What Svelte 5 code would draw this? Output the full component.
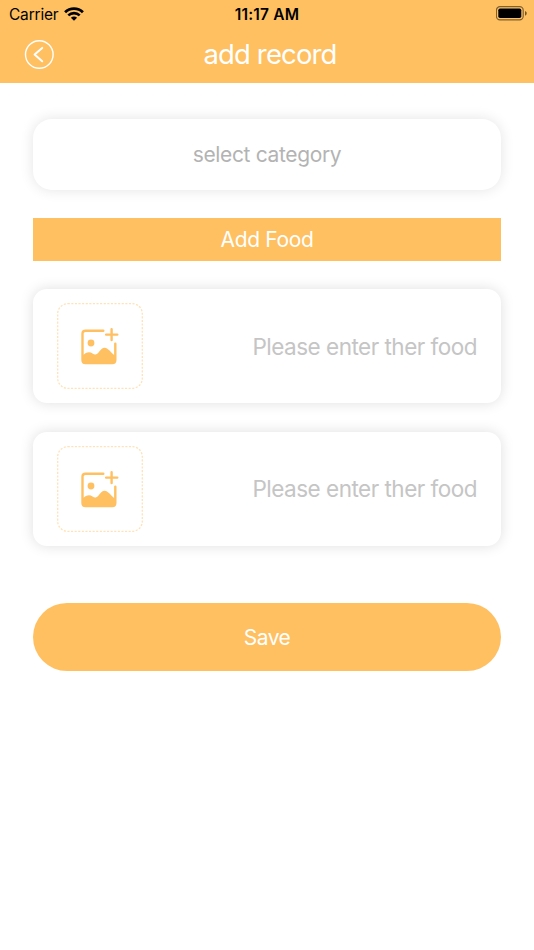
<script>
  const foods = [1, 2];
</script>

<main>
  <header>
    <div class="status">
      <div class="carrier">
        <span>Carrier</span>
        <svg width="20" height="14" viewBox="0 0 20 14" fill="none" stroke="#000">
          <path d="M1.1 5.2C6 .35 14 .35 18.9 5.2" stroke-width="2.8" />
          <path d="M4.3 8.4C7.5 5.3 12.5 5.3 15.7 8.4" stroke-width="2.6" />
          <path d="M10 13.8 6.9 10.8C8.6 9.1 11.4 9.1 13.1 10.8Z" fill="#000" stroke="none" />
        </svg>
      </div>
      <time>11:17 AM</time>
      <svg class="battery" width="32" height="15" viewBox="0 0 32 15">
        <rect x=".4" y=".7" width="26.8" height="13.2" rx="3.6" fill="none" stroke="#000" stroke-opacity=".5" stroke-width="1.2" />
        <rect x="2.3" y="2.5" width="23" height="9.5" rx="1.7" />
        <path d="M29 5.1c2.3.9 2.3 3.7 0 4.6Z" fill-opacity=".55" />
      </svg>
    </div>
    <div class="nav">
      <button class="back" aria-label="Back">
        <svg width="30" height="30" viewBox="0 0 30 30" fill="none" stroke="#fff">
          <circle cx="15.3" cy="14.5" r="13.8" stroke-width="1.4" />
          <path d="m18.2 7.9-7.6 6.7 7.6 6.7" stroke-width="2" stroke-linecap="round" stroke-linejoin="round" />
        </svg>
      </button>
      <h1>add record</h1>
    </div>
  </header>

  <section>
    <button class="category"><span>select category</span></button>
    <button class="add"><span>Add Food</span></button>
    {#each foods as food (food)}
      <div class="food">
        <button class="photo" aria-label="Add photo">
          <svg class="dash" width="86" height="86" viewBox="0 0 86 86">
            <rect x=".7" y=".7" width="84.6" height="84.6" rx="10" fill="none" stroke="#ffe2b8" stroke-width="1.3" stroke-dasharray="2.1 1.5" />
          </svg>
          <svg width="38" height="38" viewBox="0.7 -0.6 38 38" fill="none" stroke="#ffc062">
            <path d="M23 3.2H5.2Q2.2 3.2 2.2 6.2V32.5Q2.2 35.5 5.2 35.5H32Q35 35.5 35 32.5V16" stroke-width="2.4" stroke-linecap="round" />
            <path d="M31.3 1.6V12.4M25.8 7H37" stroke-width="2.4" stroke-linecap="round" />
            <circle cx="10.7" cy="15.4" r="3.4" fill="#ffc062" stroke="none" />
            <path d="M2 28.3C6.1 24.1 9.5 24 12.2 25.9C14.6 27.6 16 27.2 18.2 24.8C20.6 22.2 22 20.2 24.4 20.2C28 20.2 31 25.7 35 28.3V32.5Q35 35.8 32 35.8H5.2Q2.2 35.8 2 32.5Z" fill="#ffc062" stroke="none" />
          </svg>
        </button>
        <span class="placeholder">Please enter ther food</span>
      </div>
    {/each}
    <button class="save"><span>Save</span></button>
  </section>
</main>

<style>
  :global(body) {
    background: #fff;
  }
  main {
    min-height: 950px;
    font-family: Inter, "Liberation Sans", sans-serif;
  }
  button {
    border: 0;
    padding: 0;
    font: inherit;
    background: none;
    display: flex;
    align-items: center;
    justify-content: center;
  }
  header {
    height: 83px;
    box-sizing: border-box;
    background: #ffc062;
  }
  .status {
    height: 28px;
    display: grid;
    grid-template-columns: 1fr auto 1fr;
    align-items: center;
    padding: 0 9px;
    font-size: 15.5px;
    line-height: 28px;
  }
  .carrier {
    display: flex;
    align-items: center;
    gap: 6px;
    letter-spacing: -0.2px;
  }
  .carrier span,
  time {
    padding-top: 1px;
  }
  .carrier svg {
    margin-top: -2px;
  }
  time {
    font-weight: 600;
    font-size: 15.5px;
    letter-spacing: 0.2px;
  }
  .battery {
    justify-self: end;
    margin: -2px -3px 0 0;
  }
  .nav {
    height: 53px;
    display: grid;
    grid-template-columns: 60px 1fr 60px;
    align-items: center;
  }
  .back {
    width: 30px;
    margin-left: 24px;
  }
  h1 {
    margin: 0 0 0 6px;
    color: #fff;
    text-align: center;
    font-size: 27.5px;
    font-weight: 400;
    line-height: 53px;
    letter-spacing: -0.85px;
  }
  section {
    display: flex;
    flex-direction: column;
    padding: 35.5px 33px 0;
    gap: 28.5px;
  }
  .category {
    height: 71px;
    border-radius: 19px;
    background: #fff;
    box-shadow: 0 0 14px rgba(0, 0, 0, 0.11);
    color: #b3b3b3;
    font-size: 21px;
    letter-spacing: -0.35px;
  }
  .add {
    height: 42.5px;
    background: #ffc062;
    color: #fff;
    font-size: 21px;
    letter-spacing: -0.35px;
  }
  .food {
    height: 114px;
    box-sizing: border-box;
    display: flex;
    align-items: center;
    justify-content: space-between;
    padding: 0 24px;
    border-radius: 14px;
    background: #fff;
    box-shadow: 0 0 14px rgba(0, 0, 0, 0.13);
  }
  .photo {
    display: grid;
    place-items: center;
    width: 86px;
    height: 86px;
  }
  .photo svg {
    grid-area: 1 / 1;
  }
  .placeholder {
    color: #c5c5c5;
    font-size: 22.5px;
    letter-spacing: -0.5px;
  }
  .save {
    height: 68.5px;
    margin-top: 28.5px;
    border-radius: 35px;
    background: #ffc062;
    color: #fff;
    font-size: 21px;
    letter-spacing: -0.5px;
  }
  .save span {
    padding-top: 1px;
  }
</style>
